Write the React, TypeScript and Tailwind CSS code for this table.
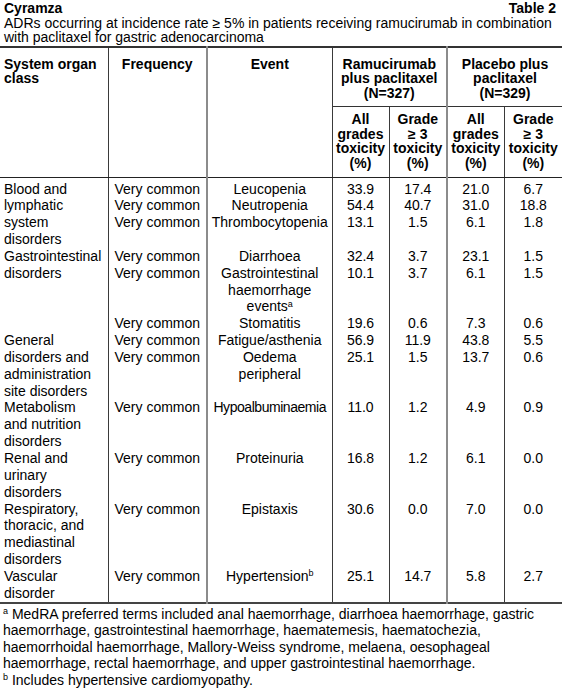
import React from "react";

const colBorder = [
  "border-r border-r-[#3a3a3a]",
  "border-r-2 border-r-[#8c8c8c]",
  "border-r border-r-[#3a3a3a]",
  "border-r border-r-[#3a3a3a]",
  "border-r-2 border-r-[#8c8c8c]",
  "border-r border-r-[#3a3a3a]",
  "",
];

const rowHeight: Record<number, string> = {
  1: "h-[16.85px]",
  2: "h-[33.7px]",
  3: "h-[50.55px]",
  4: "h-[67.4px]",
};

type Row = { event: React.ReactNode[]; values: string[]; lines?: number };
type Group = { organ: string[]; rows: Row[] };

const groups: Group[] = [
  {
    organ: ["Blood and", "lymphatic", "system", "disorders"],
    rows: [
      { event: ["Leucopenia"], values: ["33.9", "17.4", "21.0", "6.7"] },
      { event: ["Neutropenia"], values: ["54.4", "40.7", "31.0", "18.8"] },
      { event: ["Thrombocytopenia"], values: ["13.1", "1.5", "6.1", "1.8"], lines: 2 },
    ],
  },
  {
    organ: ["Gastrointestinal", "disorders"],
    rows: [
      { event: ["Diarrhoea"], values: ["32.4", "3.7", "23.1", "1.5"] },
      {
        event: [
          "Gastrointestinal",
          "haemorrhage",
          <>
            events<sup className="text-[9px]">a</sup>
          </>,
        ],
        values: ["10.1", "3.7", "6.1", "1.5"],
      },
      { event: ["Stomatitis"], values: ["19.6", "0.6", "7.3", "0.6"] },
    ],
  },
  {
    organ: ["General", "disorders and", "administration", "site disorders"],
    rows: [
      { event: ["Fatigue/asthenia"], values: ["56.9", "11.9", "43.8", "5.5"] },
      { event: ["Oedema", "peripheral"], values: ["25.1", "1.5", "13.7", "0.6"], lines: 3 },
    ],
  },
  {
    organ: ["Metabolism", "and nutrition", "disorders"],
    rows: [{ event: ["Hypoalbuminaemia"], values: ["11.0", "1.2", "4.9", "0.9"] }],
  },
  {
    organ: ["Renal and", "urinary", "disorders"],
    rows: [{ event: ["Proteinuria"], values: ["16.8", "1.2", "6.1", "0.0"] }],
  },
  {
    organ: ["Respiratory,", "thoracic, and", "mediastinal", "disorders"],
    rows: [{ event: ["Epistaxis"], values: ["30.6", "0.0", "7.0", "0.0"] }],
  },
  {
    organ: ["Vascular", "disorder"],
    rows: [
      {
        event: [
          <>
            Hypertension<sup className="text-[9px]">b</sup>
          </>,
        ],
        values: ["25.1", "14.7", "5.8", "2.7"],
      },
    ],
  },
];

const Lines = ({ items }: { items: React.ReactNode[] }) => (
  <>
    {items.map((item, i) => (
      <div key={i} className="whitespace-nowrap">
        {item}
      </div>
    ))}
  </>
);

const Spacer = ({ h }: { h: string }) => (
  <tr className={h}>
    {colBorder.map((b, i) => (
      <td key={i} className={`p-0 ${b}`} />
    ))}
  </tr>
);

export default function App() {
  return (
    <div className="w-[562px] bg-white text-black font-['Liberation_Sans',Arial,sans-serif] text-[14px]">
      {/* Title */}
      <div className="px-[4px] pt-[1px] leading-[14.5px]">
        <div className="flex justify-between pr-[2px] font-bold">
          <span>Cyramza</span>
          <span>Table 2</span>
        </div>
        <div>ADRs occurring at incidence rate ≥ 5% in patients receiving ramucirumab in combination</div>
        <div>with paclitaxel for gastric adenocarcinoma</div>
      </div>

      <table className="mt-[1px] w-[562px] table-fixed border-collapse border-t-2 border-b-2 border-t-[#333] border-b-[#444]">
        <colgroup>
          <col className="w-[108px]" />
          <col className="w-[99px]" />
          <col className="w-[125px]" />
          <col className="w-[57px]" />
          <col className="w-[58px]" />
          <col className="w-[57px]" />
          <col className="w-[58px]" />
        </colgroup>
        <thead className="font-bold leading-[14.5px]">
          <tr className="h-[60px]">
            <th rowSpan={2} className={`align-top text-left pl-[4px] pt-[9px] border-b border-b-[#222] ${colBorder[0]}`}>
              System organ
              <br />
              class
            </th>
            <th rowSpan={2} className={`align-top text-center pt-[9px] border-b border-b-[#222] ${colBorder[1]}`}>
              Frequency
            </th>
            <th rowSpan={2} className={`align-top text-center pt-[9px] border-b border-b-[#222] ${colBorder[2]}`}>
              Event
            </th>
            <th colSpan={2} className={`align-top text-center pt-[9px] border-b border-b-[#333] ${colBorder[4]}`}>
              Ramucirumab
              <br />
              plus paclitaxel
              <br />
              (N=327)
            </th>
            <th colSpan={2} className="align-top text-center pt-[9px] border-b border-b-[#333]">
              Placebo plus
              <br />
              paclitaxel
              <br />
              (N=329)
            </th>
          </tr>
          <tr className="h-[71px]">
            {[
              ["All", "grades"],
              ["Grade", "≥ 3"],
              ["All", "grades"],
              ["Grade", "≥ 3"],
            ].map((head, i) => (
              <th key={i} className={`align-top text-center pt-[5px] border-b border-b-[#222] ${colBorder[i + 3]}`}>
                {head[0]}
                <br />
                {head[1]}
                <br />
                toxicity
                <br />
                (%)
              </th>
            ))}
          </tr>
        </thead>
        <tbody className="leading-[16.85px]">
          <Spacer h="h-[3px]" />
          {groups.map((g, gi) =>
            g.rows.map((r, ri) => (
              <tr key={`${gi}-${ri}`} className={rowHeight[r.lines ?? 1]}>
                {ri === 0 && (
                  <td rowSpan={g.rows.length} className={`align-top p-0 pl-[4px] ${colBorder[0]}`}>
                    <Lines items={g.organ} />
                  </td>
                )}
                <td className={`align-top p-0 pl-[6px] ${colBorder[1]}`}>Very common</td>
                <td
                  className={`align-top p-0 text-center ${colBorder[2]} ${
                    r.event[0] === "Hypoalbuminaemia" ? "tracking-[-0.45px]" : ""
                  }`}
                >
                  <Lines items={r.event} />
                </td>
                {r.values.map((v, vi) => (
                  <td key={vi} className={`align-top p-0 text-center ${colBorder[vi + 3]}`}>
                    {v}
                  </td>
                ))}
              </tr>
            ))
          )}
          <Spacer h="h-[1px]" />
        </tbody>
      </table>

      {/* Footnotes */}
      <div className="px-[3px] pt-[2px] leading-[16.5px] whitespace-nowrap">
        <div>
          <sup className="text-[9px]">a</sup> MedRA preferred terms included anal haemorrhage, diarrhoea haemorrhage, gastric
        </div>
        <div>haemorrhage, gastrointestinal haemorrhage, haematemesis, haematochezia,</div>
        <div>haemorrhoidal haemorrhage, Mallory-Weiss syndrome, melaena, oesophageal</div>
        <div>haemorrhage, rectal haemorrhage, and upper gastrointestinal haemorrhage.</div>
        <div>
          <sup className="text-[9px]">b</sup> Includes hypertensive cardiomyopathy.
        </div>
      </div>
    </div>
  );
}
